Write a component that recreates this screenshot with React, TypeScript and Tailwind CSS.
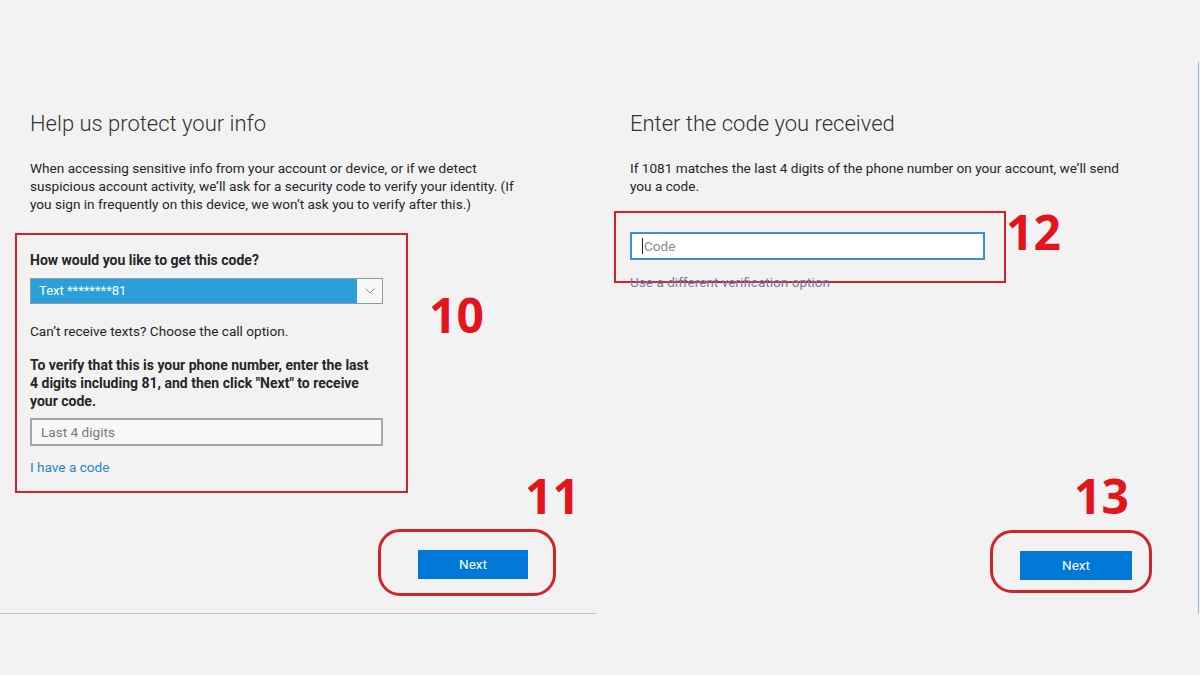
import React from 'react';

const font = "font-['Roboto','Liberation_Sans',sans-serif]";

function Num({ children, className }: { children: React.ReactNode; className: string }) {
  return (
    <span
      className={`absolute font-['Open_Sans','Liberation_Sans',sans-serif] font-bold text-[48px] leading-none text-[#e3141c] ${className}`}
    >
      {children}
    </span>
  );
}

function NextButton({ ring, btn }: { ring: string; btn: string }) {
  return (
    <div className={`border-[3px] border-[#d2232a] rounded-[22px] ${ring}`}>
      <button className={`bg-[#0078d7] text-white text-[13.5px] leading-none ${btn}`}>Next</button>
    </div>
  );
}

export default function App() {
  return (
    <div className={`w-[1200px] h-[675px] bg-[#f2f2f2] flex text-[#262626] ${font} overflow-hidden`}>
      {/* Left panel */}
      <div className="relative w-[596px] h-[614px] border-b border-[#a9c7df] shrink-0 flex flex-col">
        <h1 className="ml-[30px] mt-[109px] text-[22px] leading-[30px] font-light text-[#333]">
          Help us protect your info
        </h1>
        <p className="ml-[30px] mt-[20px] text-[13.6px] leading-[18px] whitespace-nowrap">
          When accessing sensitive info from your account or device, or if we detect
          <br />
          suspicious account activity, we’ll ask for a security code to verify your identity. (If
          <br />
          you sign in frequently on this device, we won’t ask you to verify after this.)
        </p>

        <div className="ml-[15px] mt-[20px] w-[393px] border-2 border-[#d2232a] pl-[13px] pt-[16px] pb-[15px] flex flex-col">
          <div className="text-[14px] leading-[18px] font-bold">How would you like to get this code?</div>
          <div className="mt-[9px] w-[353px] h-[26px] flex border border-[#8f9aa3] bg-[#2b9fd9]">
            <span className="flex-1 pl-[8px] text-white text-[13px] leading-[24px]">Text ********81</span>
            <span className="w-[25px] h-full bg-[#f7f7f7] flex items-center justify-center">
              <svg width="10" height="6" viewBox="0 0 10 6">
                <path d="M0.5 0.5 L5 5 L9.5 0.5" fill="none" stroke="#8a8a8a" strokeWidth="1" />
              </svg>
            </span>
          </div>
          <div className="mt-[18px] text-[13.6px] leading-[18px]">Can’t receive texts? Choose the call option.</div>
          <div className="mt-[16px] text-[14px] leading-[18px] font-bold whitespace-nowrap">
            To verify that this is your phone number, enter the last
            <br />
            4 digits including 81, and then click "Next" to receive
            <br />
            your code.
          </div>
          <div className="mt-[8px] w-[353px] h-[28px] border-2 border-[#a6a6a6] bg-[#f8f8f8] pl-[9px] text-[13.6px] leading-[24px] text-[#7a7a7a]">
            Last 4 digits
          </div>
          <a className="mt-[12px] text-[13.6px] leading-[18px] text-[#2a86c8]">I have a code</a>
        </div>

        <div className="flex ml-[378px] mt-[36px]">
          <NextButton ring="pl-[37px] pr-[25px] pt-[18px] pb-[14px]" btn="w-[110px] h-[29px]" />
        </div>

        <Num className="left-[429px] top-[291px]">10</Num>
        <Num className="left-[525px] top-[472px]">11</Num>
      </div>

      <div className="w-[4px] shrink-0" />

      {/* Right panel */}
      <div className="relative w-[600px] shrink-0 flex flex-col">
        <h1 className="ml-[30px] mt-[109px] text-[22px] leading-[30px] font-light text-[#333]">
          Enter the code you received
        </h1>
        <p className="ml-[30px] mt-[20px] text-[13.6px] leading-[18px] whitespace-nowrap">
          If 1081 matches the last 4 digits of the phone number on your account, we’ll send
          <br />
          you a code.
        </p>

        <div className="ml-[14px] mt-[16px] w-[392px] h-[72px] border-2 border-[#d2232a] pl-[14px] pt-[19px]">
          <div className="w-[355px] h-[28px] border-2 border-[#3d8fd1] bg-white pl-[10px] flex items-center text-[13.6px] text-[#8a8a8a]">
            <span className="w-px h-[16px] bg-[#222] mr-px" />
            Code
          </div>
        </div>
        <a className="relative ml-[30px] -mt-[10px] text-[13.6px] leading-[18px] text-[#6d7fa6]">
          Use a different verification option
        </a>

        <div className="ml-[390px] mt-[239px] flex">
          <NextButton ring="pl-[27px] pr-[17px] pt-[18px] pb-[10px]" btn="w-[112px] h-[29px]" />
        </div>

        <Num className="left-[406px] top-[208px]">12</Num>
        <Num className="left-[474px] top-[472px]">13</Num>

        <div className="absolute right-[1px] top-[62px] h-[552px] w-px bg-[#8fb8da]" />
      </div>
    </div>
  );
}
